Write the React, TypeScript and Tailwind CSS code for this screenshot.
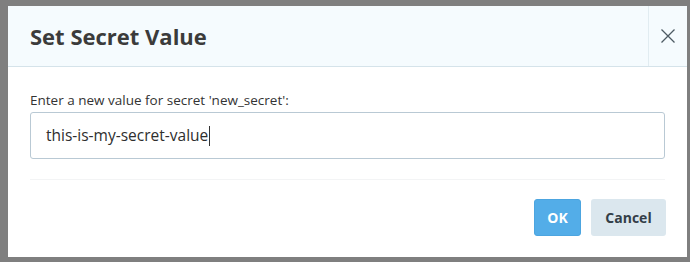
export default function App() {
  return (
    <div
      className="w-[690px] h-[262px] bg-[#7f7f7f] pt-[6px] pl-[8px] pr-[3px] pb-[5px]"
      style={{ fontFamily: '"Open Sans", "Liberation Sans", sans-serif' }}
    >
      <div className="h-full bg-white flex flex-col">
        {/* header */}
        <div className="h-[61px] bg-[#f5fbfe] border-b border-[#d5e3ea] flex items-stretch">
          <h1 className="flex-1 flex items-center pl-[22px] text-[22px] font-bold text-[#3b3b3b]">
            Set Secret Value
          </h1>
          <button className="w-[39px] border-l border-[#e1ecf1] flex items-center justify-center text-[#4d5a63]">
            <svg width="16" height="16" viewBox="0 0 16 16" fill="none" stroke="currentColor" strokeWidth="1.3">
              <path d="M1.5 1.5 L14.5 14.5 M14.5 1.5 L1.5 14.5" />
            </svg>
          </button>
        </div>

        {/* body */}
        <div className="px-[22px] pt-[23px]">
          <label className="block text-[13.5px] text-[#333] leading-[20px] mb-[2px]">
            Enter a new value for secret 'new_secret':
          </label>
          <div className="h-[47px] border border-[#b9c9d4] rounded-[3px] flex items-center pl-[15px] text-[15.5px] text-[#2e2e2e]">
            <span>this-is-my-secret-value</span>
            <span className="w-px h-[20px] bg-[#333] ml-px" />
          </div>
          <div className="mt-[20px] border-t border-[#f3f4f5]" />
        </div>

        {/* footer */}
        <div className="flex justify-end gap-[10px] px-[21px] pt-[19px]">
          <button className="w-[47px] h-[37px] rounded-[3px] bg-[#53ade8] border border-[#4ca5e0] text-white font-bold text-[14px]">
            OK
          </button>
          <button className="w-[75px] h-[37px] rounded-[3px] bg-[#dbe7ee] text-[#333e48] font-bold text-[14px]">
            Cancel
          </button>
        </div>
      </div>
    </div>
  );
}
